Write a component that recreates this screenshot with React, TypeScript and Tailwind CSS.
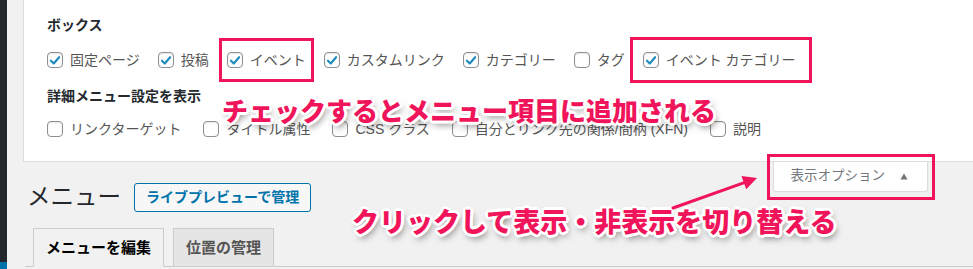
const PINK = 'border-[#f0145a]'

function Check({ checked }: { checked?: boolean }) {
  return (
    <span className="flex h-4 w-4 shrink-0 items-center justify-center rounded-[4px] border border-[#8c8f94] bg-white shadow-[inset_0_1px_2px_rgba(0,0,0,0.1)]">
      {checked && (
        <svg viewBox="0 0 16 16" className="h-[15px] w-[15px]">
          <path
            d="M3.4 8.3 L6.6 11.4 L12.7 4.3"
            fill="none"
            stroke="#1e8cbe"
            strokeWidth="2.5"
            strokeLinecap="round"
            strokeLinejoin="round"
          />
        </svg>
      )}
    </span>
  )
}

function Item({ label, checked }: { label: string; checked?: boolean }) {
  return (
    <label className="flex items-center gap-[7px] whitespace-nowrap text-[14px] text-[#555]">
      <Check checked={checked} />
      {label}
    </label>
  )
}

const boxes = [
  { label: '固定ページ', checked: true },
  { label: '投稿', checked: true },
  { label: 'イベント', checked: true },
  { label: 'カスタムリンク', checked: true },
  { label: 'カテゴリー', checked: true },
  { label: 'タグ', checked: false },
  { label: 'イベント カテゴリー', checked: true },
]

const advanced = ['リンクターゲット', 'タイトル属性', 'CSS クラス', '自分とリンク先の関係/間柄 (XFN)', '説明']

const outline =
  '[text-shadow:0_0_1px_#fff,2px_0_0_#fff,-2px_0_0_#fff,0_2px_0_#fff,0_-2px_0_#fff,2px_2px_0_#fff,-2px_-2px_0_#fff,2px_-2px_0_#fff,-2px_2px_0_#fff,3px_0_0_#fff,-3px_0_0_#fff,0_3px_0_#fff,0_-3px_0_#fff,2px_4px_7px_rgba(0,0,0,0.55)]'

export default function App() {
  return (
    <div className="relative flex h-[269px] w-[973px] overflow-hidden bg-[#f1f1f1] font-['Liberation_Sans','Noto_Sans_CJK_JP',sans-serif]">
      {/* admin menu edge */}
      <div className="flex w-[7px] shrink-0 flex-col bg-[#23282d]">
        <div className="flex-1" />
        <div className="h-[7px] bg-[#0073aa]" />
      </div>

      <div className="flex min-w-0 flex-1 flex-col">
        {/* Screen options panel */}
        <div className="ml-[16px] h-[162px] shrink-0 border-b border-l border-[#ddd] bg-white pl-[23px]">
          <h5 className="pt-[15px] text-[14px] font-bold leading-[20px] text-[#23282d]">ボックス</h5>
          <div className="mt-[11px] flex h-[28px] items-center gap-x-[18px]">
            {boxes.map((b) => (
              <Item key={b.label} label={b.label} checked={b.checked} />
            ))}
          </div>
          <h5 className="mt-[12px] text-[14px] font-bold leading-[20px] text-[#23282d]">詳細メニュー設定を表示</h5>
          <div className="mt-[9px] flex h-[28px] items-center gap-x-[22px]">
            {advanced.map((l) => (
              <Item key={l} label={l} />
            ))}
          </div>
        </div>

        {/* Page */}
        <div className="flex flex-col pl-[18px] pr-[45px]">
          <div className="mt-[21px] flex h-[29px] items-start">
            <h1 className="ml-[2px] text-[23.5px] font-normal leading-[29px] text-[#23282d]">メニュー</h1>
            <button className="ml-[13px] flex h-[29px] items-center rounded-[3px] border border-[#0073aa] bg-[#f7f7f7] px-[11px] text-[14px] font-semibold text-[#0073aa]">
              ライブプレビューで管理
            </button>
            <button className="-mt-[21px] ml-auto flex h-[30px] items-center gap-[15px] rounded-b-[3px] border border-t-0 border-[#ddd] bg-white pl-[17px] pr-[19px] text-[13.5px] text-[#72777c] shadow-[0_1px_1px_-1px_rgba(0,0,0,0.1)]">
              表示オプション
              <svg viewBox="0 0 8 7" className="h-[7px] w-[8px]">
                <path d="M4 0.5 L7.6 6.5 L0.4 6.5 Z" fill="#72777c" />
              </svg>
            </button>
          </div>

          <div className="-mr-[45px] mt-[16px] flex gap-[9px] border-b border-[#ccc] pl-[8px]">
            <div className="-mb-px flex h-[39px] items-center border border-[#ccc] border-b-[#f1f1f1] bg-[#f1f1f1] px-[12px] pt-[2px] text-[15px] font-bold text-[#000]">
              メニューを編集
            </div>
            <div className="-mb-px flex h-[39px] items-center border border-[#ccc] bg-[#e5e5e5] px-[12px] pt-[2px] text-[15px] font-bold text-[#555]">
              位置の管理
            </div>
          </div>
        </div>
      </div>

      {/* annotations */}
      <div className={`absolute left-[219px] top-[38px] h-[44px] w-[95px] border-[3px] ${PINK}`} />
      <div className={`absolute left-[630px] top-[37px] h-[46px] w-[182px] border-[3px] ${PINK}`} />
      <div className={`absolute left-[767px] top-[154px] h-[46px] w-[168px] border-[3px] ${PINK}`} />

      <div className={`absolute left-[222px] top-[97px] whitespace-nowrap font-['Noto_Sans_CJK_JP',sans-serif] text-[26px] font-black leading-none text-[#f0145a] ${outline}`}>
        チェックするとメニュー項目に追加される
      </div>
      <div className={`absolute left-[352px] top-[207px] whitespace-nowrap font-['Noto_Sans_CJK_JP',sans-serif] text-[27px] font-black leading-none text-[#f0145a] ${outline}`}>
        クリックして表示・非表示を切り替える
      </div>

      <svg className="absolute left-[660px] top-[165px] h-[50px] w-[110px]" viewBox="0 0 110 50">
        <line x1="13" y1="43" x2="85" y2="17.3" stroke="#f0145a" strokeWidth="3" strokeLinecap="round" />
        <path d="M97 13 L86.2 24.3 L81.5 11.1 Z" fill="#f0145a" />
      </svg>
    </div>
  )
}
